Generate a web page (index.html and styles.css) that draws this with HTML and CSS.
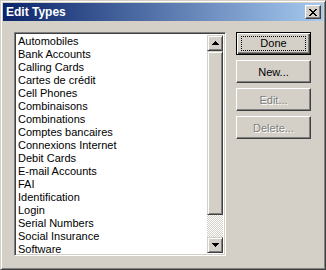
FILE: index.html
```html
<!DOCTYPE html>
<html lang="en">

<head>
    <meta charset="UTF-8">
    <title>Edit Types</title>
    <link rel="stylesheet" href="styles.css">
</head>

<body>

    <div class="window">

        <!-- Title bar -->
        <div class="titlebar">
            <span class="title">Edit Types</span>
            <div class="close-btn">
                <svg width="8" height="7" viewBox="0 0 8 7">
                    <path d="M0 0h2v1h-2zM6 0h2v1h-2zM1 1h2v1h-2zM5 1h2v1h-2zM2 2h4v1h-4zM3 3h2v1h-2zM2 4h4v1h-4zM1 5h2v1h-2zM5 5h2v1h-2zM0 6h2v1h-2zM6 6h2v1h-2z" fill="#000"/>
                </svg>
            </div>
        </div>

        <!-- Dialog content -->
        <div class="client">
            <div class="listbox">
                <ul class="items">
                    <li>Automobiles</li>
                    <li>Bank Accounts</li>
                    <li>Calling Cards</li>
                    <li>Cartes de crédit</li>
                    <li>Cell Phones</li>
                    <li>Combinaisons</li>
                    <li>Combinations</li>
                    <li>Comptes bancaires</li>
                    <li>Connexions Internet</li>
                    <li>Debit Cards</li>
                    <li>E-mail Accounts</li>
                    <li>FAI</li>
                    <li>Identification</li>
                    <li>Login</li>
                    <li>Serial Numbers</li>
                    <li>Social Insurance</li>
                    <li>Software</li>
                </ul>
                <div class="scrollbar">
                    <div class="arrow">
                        <svg width="7" height="4" viewBox="0 0 7 4"><path d="M3 0h1v1h1v1h1v1h1v1h-7v-1h1v-1h1v-1h1z" fill="#000"/></svg>
                    </div>
                    <div class="thumb"></div>
                    <div class="track"></div>
                    <div class="arrow">
                        <svg width="7" height="4" viewBox="0 0 7 4"><path d="M0 0h7v1h-1v1h-1v1h-1v1h-1v-1h-1v-1h-1v-1h-1z" fill="#000"/></svg>
                    </div>
                </div>
            </div>

            <div class="buttons">
                <div class="btn default"><span class="focus">Done</span></div>
                <div class="btn"><span>New...</span></div>
                <div class="btn disabled"><span>Edit...</span></div>
                <div class="btn disabled"><span>Delete...</span></div>
            </div>
        </div>

    </div>

</body>

</html>
```

FILE: styles.css
```css
body {
    margin: 0;
    font-family: "Liberation Sans", Arial, sans-serif;
    font-size: 11px;
    color: #000;
    background: #d4d0c8;
}

.window {
    width: 326px;
    height: 270px;
    box-sizing: border-box;
    background: #d4d0c8;
    border: 1px solid;
    border-color: #d4d0c8 #404040 #404040 #d4d0c8;
    box-shadow: inset 1px 1px #fff, inset -1px -1px #808080;
    padding: 2px;
}

.titlebar {
    height: 18px;
    display: flex;
    align-items: center;
    justify-content: space-between;
    background: linear-gradient(to right, #0a246a, #a6caf0);
    padding: 0 2px 0 2px;
}

.title {
    color: #fff;
    font-weight: bold;
    font-size: 12px;
    padding-left: 1px;
}

.close-btn {
    width: 16px;
    height: 14px;
    box-sizing: border-box;
    background: #d4d0c8;
    border: 1px solid;
    border-color: #fff #404040 #404040 #fff;
    box-shadow: inset -1px -1px #808080;
    display: flex;
    align-items: center;
    justify-content: center;
    padding-right: 1px;
}

.client {
    display: flex;
    gap: 10px;
    padding: 11px 10px 0 11px;
}

/* List box */

.listbox {
    width: 212px;
    height: 224px;
    box-sizing: border-box;
    display: flex;
    background: #fff;
    border: 1px solid;
    border-color: #808080 #fff #fff #808080;
    box-shadow: inset 1px 1px #404040, inset -1px -1px #d4d0c8;
    padding: 2px 2px 2px 2px;
}

.items {
    flex: 1;
    list-style: none;
    margin: 0;
    padding: 0 0 0 1px;
    overflow: hidden;
}

.items li {
    height: 13px;
    line-height: 13px;
    white-space: nowrap;
}

.scrollbar {
    width: 16px;
    display: flex;
    flex-direction: column;
}

.arrow,
.thumb {
    box-sizing: border-box;
    background: #d4d0c8;
    border: 1px solid;
    border-color: #d4d0c8 #404040 #404040 #d4d0c8;
    box-shadow: inset 1px 1px #fff, inset -1px -1px #808080;
}

.arrow {
    height: 16px;
    display: flex;
    align-items: center;
    justify-content: center;
}

.thumb {
    height: 164px;
}

.track {
    flex: 1;
    background: repeating-conic-gradient(#d4d0c8 0 25%, #fff 0 50%) 0 0 / 2px 2px;
}

/* Buttons */

.buttons {
    display: flex;
    flex-direction: column;
    gap: 5px;
}

.btn {
    width: 75px;
    height: 23px;
    box-sizing: border-box;
    border: 1px solid;
    border-color: #fff #404040 #404040 #fff;
    box-shadow: inset -1px -1px #808080;
    display: flex;
    align-items: center;
    justify-content: center;
}

.btn.default {
    border: 1px solid #000;
    box-shadow: inset 1px 1px #fff, inset -1px -1px #404040, inset -2px -2px #808080;
}

.btn .focus {
    width: 63px;
    height: 13px;
    line-height: 13px;
    text-align: center;
    outline: 1px dotted #000;
}

.btn.disabled {
    color: #808080;
    text-shadow: 1px 1px #fff;
}
```
